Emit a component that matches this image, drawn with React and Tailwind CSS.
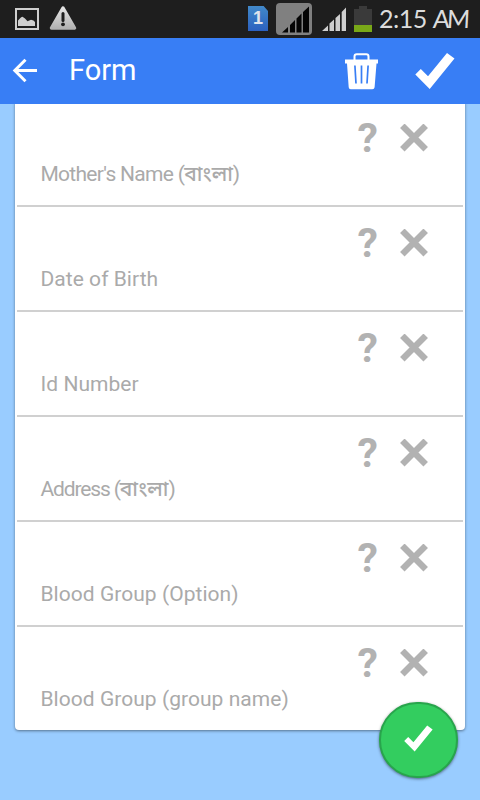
import React from 'react'

const fields = [
  { id: 1, label: "Mother's Name (", bangla: true, spacing: 'tracking-[-0.72px]' },
  { id: 2, label: 'Date of Birth' },
  { id: 3, label: 'Id Number' },
  { id: 4, label: 'Address (', bangla: true, spacing: 'tracking-[-1.15px]' },
  { id: 5, label: 'Blood Group (Option)' },
  { id: 6, label: 'Blood Group (group name)' },
]

function CheckIcon({ className }) {
  return (
    <svg viewBox="0 0 40 36" className={className} fill="currentColor">
      <path d="M0.3 21.5 L5.8 16 L13 23.2 L32 0 L39.5 5.5 L14.7 36 Z" />
    </svg>
  )
}

function TrashIcon() {
  return (
    <svg width="33" height="37" viewBox="0 0 33 37" fill="none">
      <path d="M9.5 7.5 V3.5 Q9.5 1.3 11.7 1.3 H21.3 Q23.5 1.3 23.5 3.5 V7.5" stroke="#fff" strokeWidth="2" />
      <path d="M0 6.5 H33 V10.5 H31.5 L29.6 34.2 Q29.4 36.3 27.3 36.3 H5.7 Q3.9 36.3 3.7 34.2 L2 10.5 H0 Z" fill="#fff" />
      <path d="M9.9 12.5 L11 30.5 M16.5 12.5 V30.5 M23.1 12.5 L22 30.5" stroke="#387ef5" strokeWidth="1.7" />
    </svg>
  )
}

function StatusBar() {
  return (
    <div className="flex h-[38px] items-start bg-[#1e1e1e]">
      <svg width="78" height="38" viewBox="0 0 78 38">
        <defs>
          <linearGradient id="warn" x1="0" y1="0" x2="0" y2="1">
            <stop offset="0" stopColor="#e4e4e4" />
            <stop offset="1" stopColor="#b2b2b2" />
          </linearGradient>
        </defs>
        <rect x="16" y="9" width="22" height="20" fill="none" stroke="#cfcfcf" strokeWidth="2" />
        <path d="M18 26 V20.5 Q21 17 22.5 16.8 Q25 18 27.5 21.3 L31 19.7 Q34 20 35 22 V26 Z" fill="#cfcfcf" />
        <path d="M63 8 L74.5 28 H51.5 Z" fill="url(#warn)" stroke="url(#warn)" strokeWidth="3.5" strokeLinejoin="round" />
        <path d="M63 13.5 V20.5" stroke="#1e1e1e" strokeWidth="3" strokeLinecap="round" />
        <circle cx="63" cy="24.3" r="1.9" fill="#1e1e1e" />
      </svg>
      <div className="ml-auto flex">
        <div className="mt-1.5 flex h-[25px] w-5 items-center justify-center bg-linear-to-b from-[#4289c9] to-[#2c60bf] font-['Liberation_Sans','sans-serif'] text-[18px] font-bold text-[#e0e4ec] [clip-path:polygon(0_0,78%_0,100%_20%,100%_100%,0_100%)]">
          1
        </div>
        <svg className="ml-2" width="36" height="38" viewBox="0 0 36 38">
          <rect y="3" width="36" height="32" rx="4" fill="#808080" />
          <path d="M6 32.5 L12 27 V32.5 Z M14 32.5 V25 L19 20 V32.5 Z M20.5 32.5 V18.5 L25.5 13.5 V32.5 Z M27 32.5 V12 L33 6.5 V32.5 Z" fill="#050505" />
        </svg>
        <svg className="ml-2.5" width="25" height="38" viewBox="0 0 25 38">
          <path d="M0 31 L6 25.5 V31 Z M7.5 31 V23.5 L12 19.5 V31 Z M13.5 31 V18 L18 14 V31 Z M19.7 31 V12 L24 7.5 V31 Z" fill="#cfcfcf" />
        </svg>
        <svg className="ml-[7px]" width="18" height="38" viewBox="0 0 18 38">
          <path d="M5 6 H13 V9 H18 V25 H0 V9 H5 Z" fill="#3a3a3a" />
          <path d="M0 25 H18 V32 H0 Z" fill="#79a818" />
        </svg>
        <p className="ml-[7px] flex w-[101px] pt-px font-['Lato','sans-serif'] text-[25px] leading-[34px] text-[#dcdcdc]">
          <span className="w-[54px] tracking-[-0.5px]">2:15</span>
          <span className="-skew-x-3 tracking-[-3px]">AM</span>
        </p>
      </div>
    </div>
  )
}

function Header() {
  return (
    <header className="relative z-10 flex h-[66px] items-center bg-[#387ef5] text-white">
      <svg className="ml-3" width="26" height="26" viewBox="0 0 26 26" fill="none" stroke="currentColor" strokeWidth="3">
        <path d="M25 12.5 H3 M13.5 1.8 L2.8 12.5 L13.5 23.2" />
      </svg>
      <h1 className="ml-[31px] -mt-0.5 font-['Roboto','sans-serif'] text-[29px] leading-none">Form</h1>
      <div className="ml-auto mr-[25px] flex items-center gap-[37px]">
        <TrashIcon />
        <CheckIcon className="h-9 w-10" />
      </div>
    </header>
  )
}

function FieldRow({ field }) {
  return (
    <li className="mx-0.5 h-[105px] border-b-2 border-[#d0d0d0] pl-[23.5px] pr-[35px] text-[#aaaaaa] last:border-b-0">
      <div className="flex h-[62px] items-end justify-end gap-[22px] pb-3 text-[#b2b2b2]">
        <span className="-mb-[7px] font-['Roboto','sans-serif'] text-[41px] font-bold leading-none">?</span>
        <svg width="28" height="28" viewBox="0 0 28 28" stroke="currentColor" strokeWidth="6.4">
          <path d="M2.3 1.8 L25.7 25.2 M25.7 1.8 L2.3 25.2" />
        </svg>
      </div>
      {field.bangla ? (
        <p className={`font-['Roboto','Noto_Sans_Bengali','sans-serif'] text-[21px] leading-none ${field.spacing}`}>
          {field.label}<span className="font-medium tracking-normal">বাংলা</span>)
        </p>
      ) : (
        <p className="font-['Roboto','sans-serif'] text-[21px] leading-none tracking-[0.04px]">{field.label}</p>
      )}
    </li>
  )
}

export default function App() {
  return (
    <div className="relative flex h-[800px] w-[480px] flex-col overflow-hidden bg-[#99ccff]">
      <StatusBar />
      <Header />
      <ul className="mx-[15px] -mt-0.5 h-[628px] overflow-hidden rounded-b bg-white shadow-[0_1px_3px_rgba(0,0,0,0.45)]">
        {fields.map(f => <FieldRow key={f.id} field={f} />)}
      </ul>
      <button className="absolute left-[379px] top-[702px] flex h-[76px] w-[79px] items-center justify-center rounded-full border-2 border-[#28a54c] bg-[#33cd5f] pb-[3px] text-white shadow-[0_1px_3px_rgba(0,0,0,0.5)]">
        <CheckIcon className="h-[27px] w-[29px]" />
      </button>
    </div>
  )
}
